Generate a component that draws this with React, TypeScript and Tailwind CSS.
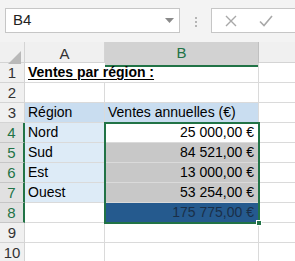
import React from "react";

const rows = [
  { n: 1, a: "Ventes par région :", b: "", kind: "title" },
  { n: 2, a: "", b: "", kind: "plain" },
  { n: 3, a: "Région", b: "Ventes annuelles (€)", kind: "head" },
  { n: 4, a: "Nord", b: "25 000,00 €", kind: "active" },
  { n: 5, a: "Sud", b: "84 521,00 €", kind: "gray" },
  { n: 6, a: "Est", b: "13 000,00 €", kind: "gray" },
  { n: 7, a: "Ouest", b: "53 254,00 €", kind: "gray" },
  { n: 8, a: "", b: "175 775,00 €", kind: "total" },
  { n: 9, a: "", b: "", kind: "plain" },
  { n: 10, a: "", b: "", kind: "plain" },
];

export default function App() {
  return (
    <div
      className="relative h-[261px] w-[295px] overflow-hidden bg-white text-[14px] text-black"
      style={{ fontFamily: "'Liberation Sans', Arial, sans-serif" }}
    >
      {/* formula bar */}
      <div className="flex h-[42px] items-start bg-[#f3f3f3] pt-2">
        <div className="ml-[5px] flex h-[25px] w-[175px] items-center justify-between border border-[#c6c6c6] bg-white pl-[7px] pr-[5px] text-[15px] text-[#222]">
          <span>B4</span>
          <svg width="9" height="5" viewBox="0 0 9 5">
            <path d="M0 0h9L4.5 5z" fill="#8a8a8a" />
          </svg>
        </div>
        <div className="flex w-[31px] flex-col items-center gap-[2px] pt-[9px]">
          <span className="h-[2px] w-[2px] bg-[#b5b5b5]" />
          <span className="h-[2px] w-[2px] bg-[#b5b5b5]" />
          <span className="h-[2px] w-[2px] bg-[#b5b5b5]" />
        </div>
        <div className="flex h-[25px] flex-1 items-center gap-[22px] border border-r-0 border-[#c6c6c6] bg-white pl-[13px]">
          <svg width="12" height="12" viewBox="0 0 12 12">
            <path d="M1 1l10 10M11 1L1 11" stroke="#a8a8a8" strokeWidth="1.4" />
          </svg>
          <svg width="14" height="12" viewBox="0 0 14 12">
            <path d="M1 6.5l4 4L13 1" stroke="#a8a8a8" strokeWidth="1.6" fill="none" />
          </svg>
        </div>
      </div>

      {/* column headers */}
      <div className="grid h-[21px] grid-cols-[25px_80px_154px_1fr] border-b border-[#d4d4d4] bg-[#f0f0f0] text-[15px] text-[#333]">
        <div className="relative border-r border-[#d4d4d4]">
          <svg className="absolute bottom-[3px] right-[3px]" width="13" height="13" viewBox="0 0 13 13">
            <path d="M13 0v13H0z" fill="#b9b9b9" />
          </svg>
        </div>
        <div className="flex items-center justify-center border-r border-[#d4d4d4]">A</div>
        <div className="flex items-center justify-center border-b-2 border-r border-b-[#217346] border-r-[#c0c0c0] bg-[#d2d2d2] text-[#217346]">
          B
        </div>
        <div />
      </div>

      {/* rows */}
      {rows.map((r) => {
        const sel = r.n >= 4 && r.n <= 8;
        const aBg =
          r.kind === "head"
            ? "bg-[#c9ddf0]"
            : r.n >= 4 && r.n <= 7
            ? "bg-[#ddebf7]"
            : "bg-white";
        const bBg =
          r.kind === "head"
            ? "bg-[#c9ddf0]"
            : r.kind === "gray"
            ? "bg-[#c8c8c8]"
            : r.kind === "total"
            ? "bg-[#255a8e] text-[#1a2f48]"
            : r.kind === "title"
            ? "bg-transparent"
            : "bg-white";
        return (
          <div
            key={r.n}
            className="grid h-[20px] grid-cols-[25px_80px_154px_1fr] leading-[19px]"
          >
            <div
              className={`border-b text-center text-[15px] ${
                sel
                  ? "border-r-2 border-b-[#c6c6c6] border-r-[#217346] bg-[#e1e1e1] text-[#217346]"
                  : "border-r border-[#d4d4d4] bg-[#f0f0f0] text-[#333]"
              }`}
            >
              {r.n}
            </div>
            <div
              className={`relative z-10 whitespace-nowrap border-b border-[#dadada] pl-[3px] ${aBg} ${
                r.kind === "title" ? "font-bold underline underline-offset-2" : "border-r"
              }`}
            >
              {r.a}
            </div>
            <div
              className={`whitespace-nowrap border-b border-r border-[#dadada] ${bBg} ${
                r.kind === "head" ? "pl-[3px] text-left" : "pr-[4px] text-right"
              }`}
            >
              {r.b}
            </div>
            <div className="border-b border-[#dadada]" />
          </div>
        );
      })}

      {/* selection */}
      <div className="pointer-events-none absolute left-[104px] top-[122px] z-20 h-[102px] w-[156px] border-2 border-[#217346]" />
      <div className="absolute left-[256px] top-[220px] z-20 h-[6px] w-[6px] border border-white bg-[#217346]" />
    </div>
  );
}
